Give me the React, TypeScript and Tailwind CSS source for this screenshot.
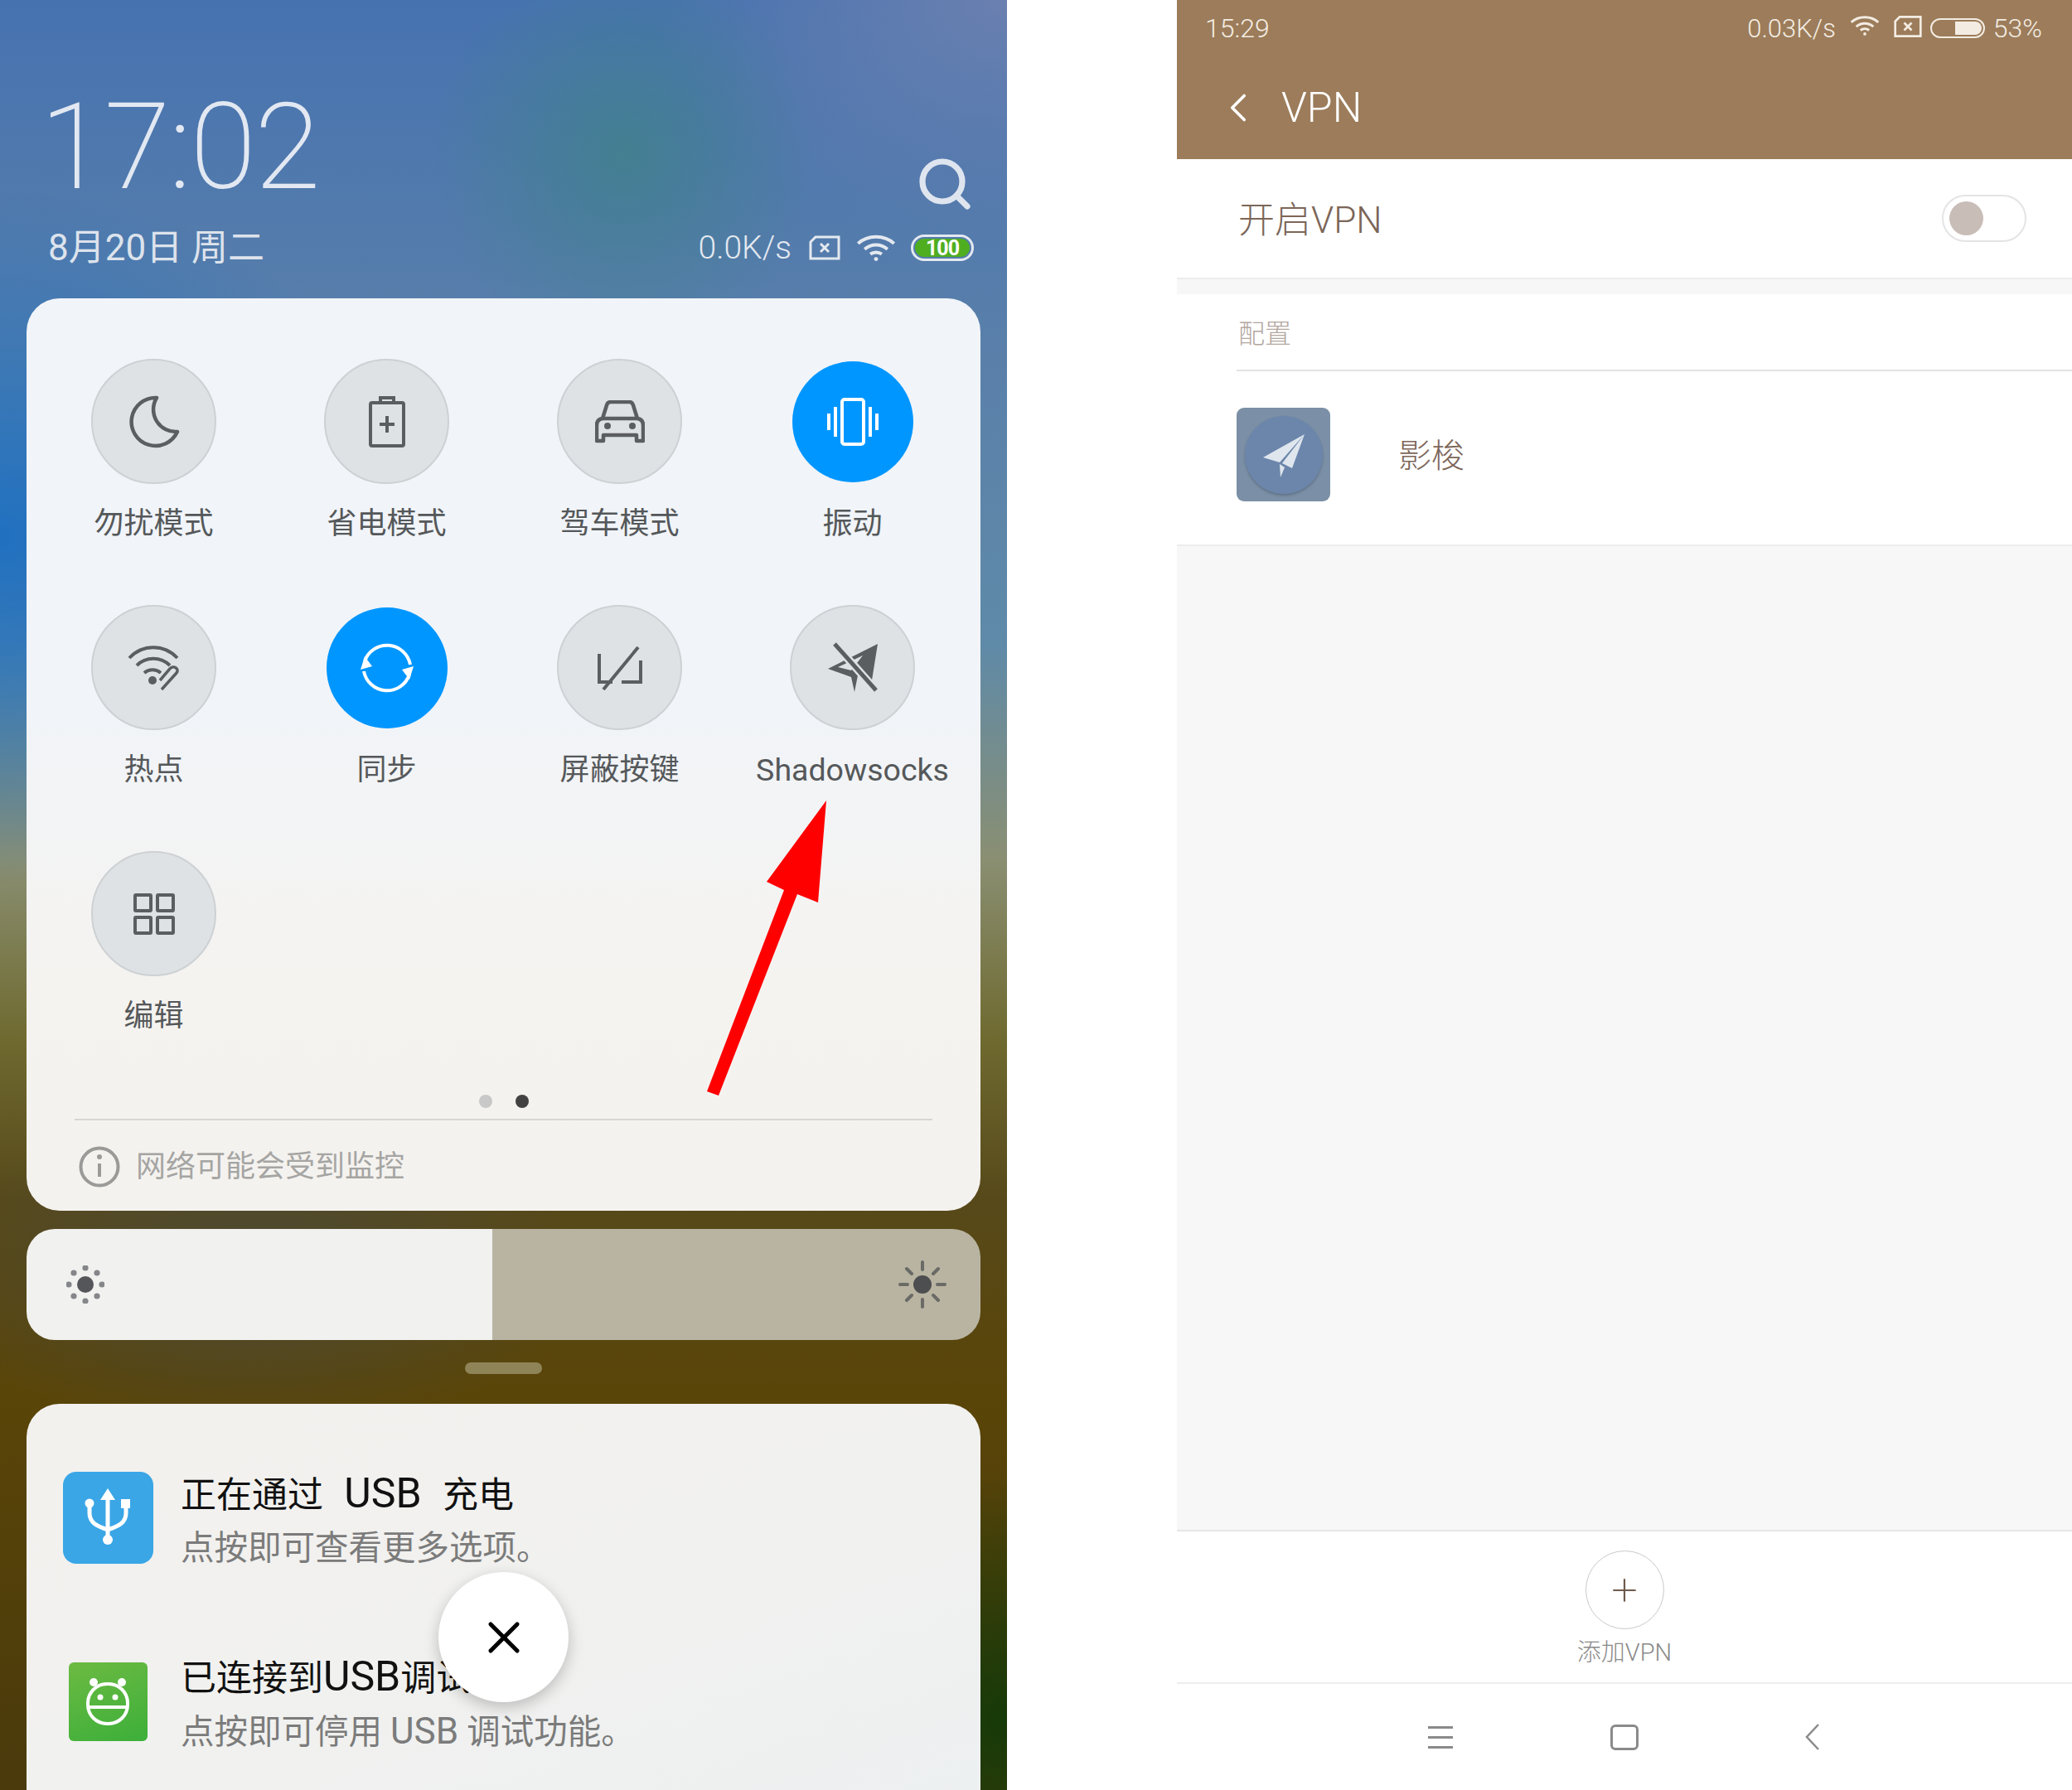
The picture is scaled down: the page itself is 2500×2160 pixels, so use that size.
import { Search, X, Plus, ChevronLeft } from "lucide-react";
import type { ReactNode } from "react";

function Tile({ label, active, wide, children }: { label: string; active?: boolean; wide?: boolean; children: ReactNode }) {
  return (
    <div className="flex h-[297px] flex-col items-center">
      <div className="flex h-[151px] items-center justify-center">
        <div
          className={`flex items-center justify-center rounded-full ${
            active ? "h-[146px] w-[146px] bg-[#0096ff]" : "h-[151px] w-[151px] border-2 border-[#cdd1d3] bg-[#dfe2e4]"
          }`}
        >
          {children}
        </div>
      </div>
      <div className={`mt-[26px] leading-[44px] font-normal whitespace-nowrap text-[#55585a] ${wide ? "text-[37.5px]" : "text-[36px]"}`}>{label}</div>
    </div>
  );
}

function SimIcon({ color }: { color: string }) {
  return (
    <svg width="40" height="30" viewBox="0 0 40 30" fill="none" stroke={color} strokeWidth="3">
      <path d="M9 2h28v26H3V8z" />
      <path d="M15 10l10 10M25 10L15 20" />
    </svg>
  );
}

function WifiIcon({ color, size }: { color: string; size: number }) {
  return (
    <svg width={size} height={size * 0.72} viewBox="0 0 48 35" fill="none" stroke={color} strokeWidth="4">
      <path d="M2 12c12-11 32-11 44 0" />
      <path d="M10 19c8-7 20-7 28 0" />
      <path d="M17 25c4-3 10-3 14 0" />
      <circle cx="24" cy="31" r="2.5" fill={color} stroke="none" />
    </svg>
  );
}

function SunSmall() {
  return (
    <svg width="46" height="46" viewBox="0 0 46 46" fill="#55565a">
      <circle cx="23" cy="23" r="10" />
      {[[23, 3], [23, 43], [3, 23], [43, 23], [9, 9], [37, 9], [9, 37], [37, 37]].map(([x, y]) => (
        <circle key={`${x}-${y}`} cx={x} cy={y} r="3.6" fill="#85868a" />
      ))}
    </svg>
  );
}

function SunLarge() {
  return (
    <svg width="58" height="58" viewBox="0 0 58 58" fill="none" stroke="#6a6a66" strokeWidth="4" strokeLinecap="round">
      <circle cx="29" cy="29" r="11" fill="#4d4e50" stroke="none" />
      <path d="M29 2v9M29 47v9M2 29h9M47 29h9M10 10l6 6M42 42l6 6M48 10l-6 6M16 42l-6 6" />
    </svg>
  );
}

function NotificationRow({
  icon,
  title,
  desc,
  className,
}: {
  icon: ReactNode;
  title: ReactNode;
  desc: ReactNode;
  className: string;
}) {
  return (
    <div className={`flex items-center ${className}`}>
      <div className="mr-[-10px] flex w-[196px] shrink-0 justify-center">{icon}</div>
      <div className="flex flex-col pt-[7px]">
        <div className="text-[43px] leading-[56px] font-normal whitespace-pre text-[#111]">{title}</div>
        <div className="mt-[8px] text-[40.5px] leading-[56px] font-normal whitespace-pre text-[#7b7b7b]">{desc}</div>
      </div>
    </div>
  );
}

export default function App() {
  return (
    <div className="flex h-[2160px] w-[2500px] overflow-hidden bg-white font-['Roboto','Noto_Sans_CJK_SC',sans-serif] font-light">
      {/* left phone */}
      <div className="relative h-full w-[1215px] shrink-0 overflow-hidden bg-[radial-gradient(ellipse_230px_240px_at_62%_8.5%,#41808cd8,transparent),radial-gradient(ellipse_420px_300px_at_100%_0%,#6a80b0,transparent),radial-gradient(ellipse_500px_420px_at_0%_30%,#2070c0,transparent),radial-gradient(ellipse_300px_300px_at_100%_96%,#153a08,transparent),radial-gradient(ellipse_400px_200px_at_25%_71%,#4a4a3ccc,transparent),linear-gradient(180deg,#4672b0_0%,#5a80aa_20%,#5f8aa8_36%,#8a8f72_48%,#6f6a30_58%,#57491a_67%,#5a4508_78%,#4a3a0c_100%)]">
        <div className="flex h-[360px] flex-col pt-[96px] pr-[39px] pl-[48px]">
          <div className="flex items-end justify-between">
            <div className="pt-[2px] text-[145px] leading-[158px] font-extralight tracking-[-2px] text-[#e2e8f2]">17:02</div>
            <Search size={72} strokeWidth={2.4} className="mb-[-2px] text-[#dfe5ef]" />
          </div>
          <div className="mt-[18px] mr-[6px] flex items-center justify-between pl-[10px]">
            <div className="text-[44px] leading-[50px] font-normal text-[#dde3ec]">8月20日 周二</div>
            <div className="mr-[-5px] flex items-center text-[#e4e9f0]">
              <span className="text-[39px] leading-[50px]">0.0K/s</span>
              <span className="ml-[20px]"><SimIcon color="#e4e9f0" /></span>
              <span className="ml-[18px]"><WifiIcon color="#e4e9f0" size={48} /></span>
              <span className="ml-[18px] flex h-[32px] w-[76px] items-center justify-center rounded-full border-[3px] border-[#e4e9f0] p-[2px]">
                <span className="flex h-full w-full items-center justify-center rounded-full bg-[#4fae20] text-[25px] leading-none font-bold tracking-[-1px] text-white">100</span>
              </span>
            </div>
          </div>
        </div>

        {/* quick settings */}
        <div className="mx-[32px] h-[1101px] rounded-[40px] bg-[linear-gradient(180deg,#f1f4f9_0%,#f1f4f8_45%,#f5f3f0_75%,#f4f2ef_100%)]">
          <div className="grid grid-cols-[repeat(4,281px)] pt-[73px] pr-[11px] pl-[13px]">
            <Tile label="勿扰模式">
              <svg width="62" height="64" viewBox="0 0 62 64" fill="none" stroke="#5b5e60" strokeWidth="4.5">
                <path d="M34 3A29 29 0 1 0 59 44A27 27 0 0 1 34 3Z" strokeLinejoin="round" />
              </svg>
            </Tile>
            <Tile label="省电模式">
              <svg width="46" height="62" viewBox="0 0 46 62" fill="none" stroke="#5b5e60" strokeWidth="4">
                <rect x="3" y="8" width="40" height="52" rx="2" />
                <path d="M15 6V2h16v4M23 24v20M14 34h18" />
              </svg>
            </Tile>
            <Tile label="驾车模式">
              <svg width="60" height="52" viewBox="0 0 60 52" fill="none" stroke="#5b5e60" strokeWidth="4.5" strokeLinejoin="round">
                <path d="M9 22l5-16q1-4 5-4h22q4 0 5 4l5 16" />
                <path d="M9 22q-7 1-7 8v19h8v-7h40v7h8V30q0-7-7-8z" />
                <circle cx="15" cy="31" r="4" fill="#5b5e60" stroke="none" />
                <circle cx="45" cy="31" r="4" fill="#5b5e60" stroke="none" />
              </svg>
            </Tile>
            <Tile label="振动" active>
              <svg width="62" height="58" viewBox="0 0 62 58" fill="none" stroke="#fff" strokeWidth="4">
                <rect x="18" y="2" width="26" height="54" rx="3" />
                <path d="M10 11v36M2 19v20M52 11v36M60 19v20" />
              </svg>
            </Tile>
            <Tile label="热点">
              <svg width="66" height="56" viewBox="0 0 66 56" fill="none" stroke="#5b5e60" strokeWidth="4">
                <path d="M3 16c16-17 42-17 58 0M12 25c11-11 29-11 40 0M21 34c6-5 14-5 20 0" />
                <circle cx="31" cy="43" r="5" fill="#5b5e60" stroke="none" />
                <path d="M42 54l18-20c4-5-4-10-8-5L40 43" strokeWidth="3.5" />
              </svg>
            </Tile>
            <Tile label="同步" active>
              <svg width="64" height="64" viewBox="0 0 64 64" fill="none" stroke="#fff" strokeWidth="4">
                <path d="M5 24A28.500 28.500 0 0 1 60 28" />
                <path d="M59 40A28.500 28.500 0 0 1 4 36" />
                <path d="M5 18l9 12-14 4zM59 46l-9-12 14-4z" fill="#fff" stroke="none" />
              </svg>
            </Tile>
            <Tile label="屏蔽按键">
              <svg width="56" height="54" viewBox="0 0 56 54" fill="none" stroke="#5b5e60" strokeWidth="4">
                <path d="M3 10v34h16M30 44h23V18M8 53L50 2" />
              </svg>
            </Tile>
            <Tile label="Shadowsocks" wide>
              <svg width="64" height="62" viewBox="0 0 64 62" fill="#5b5e60">
                <path d="M62 2L54 52 38 40 34 60 30 42 2 32zM30 34l-16-4 30-14z" fillRule="evenodd" />
                <path d="M10 2l50 56" stroke="#dfe2e4" strokeWidth="10" />
                <path d="M10 2l50 56" stroke="#5b5e60" strokeWidth="5" />
              </svg>
            </Tile>
            <Tile label="编辑">
              <svg width="50" height="50" viewBox="0 0 50 50" fill="none" stroke="#5b5e60" strokeWidth="4">
                <rect x="2" y="2" width="19" height="19" rx="1" />
                <rect x="29" y="2" width="19" height="19" rx="1" />
                <rect x="2" y="29" width="19" height="19" rx="1" />
                <rect x="29" y="29" width="19" height="19" rx="1" />
              </svg>
            </Tile>
          </div>
          <div className="mt-[-3px] flex justify-center gap-[28px]">
            <span className="h-[16px] w-[16px] rounded-full bg-[#c8c8c8]" />
            <span className="h-[16px] w-[16px] rounded-full bg-[#424242]" />
          </div>
          <div className="mx-[58px] mt-[13px] border-t-2 border-[#d6d6d4]" />
          <div className="flex items-center pt-[31px] pl-[63px]">
            <svg width="50" height="50" viewBox="0 0 50 50" fill="none" stroke="#9a9a98" strokeWidth="4">
              <circle cx="25" cy="25" r="22.5" />
              <path d="M25 21v16" />
              <circle cx="25" cy="13" r="3" fill="#9a9a98" stroke="none" />
            </svg>
            <span className="ml-[19px] text-[36px] leading-[50px] font-normal text-[#a5a5a3]">网络可能会受到监控</span>
          </div>
        </div>

        {/* brightness */}
        <div className="mx-[32px] mt-[22px] flex h-[134px] overflow-hidden rounded-[34px]">
          <div className="flex w-[562px] items-center bg-[#f1f1ef] pl-[48px]">
            <SunSmall />
          </div>
          <div className="flex flex-1 items-center justify-end bg-[#b9b4a2] pr-[41px]">
            <SunLarge />
          </div>
        </div>
        <div className="mx-auto mt-[27px] h-[14px] w-[93px] rounded-full bg-[#8f8458]" />

        {/* notifications */}
        <div className="relative mx-[32px] mt-[36px] h-[500px] rounded-t-[40px] bg-[linear-gradient(160deg,#f3f1ee_0%,#f1f1ef_50%,#edf0f1_100%)] pt-[81px]">
          <NotificationRow
            className="h-[112px]"
            icon={
              <div className="flex h-[111px] w-[109px] shrink-0 items-center justify-center rounded-[16px] bg-[#3aa6e6]">
                <svg width="56" height="70" viewBox="0 0 56 70" fill="none" stroke="#fff" strokeWidth="5">
                  <path d="M28 10v50M6 20v10c0 12 10 16 22 20 12-4 22-8 22-20V20" />
                  <path d="M28 0l9 14H19z" fill="#fff" stroke="none" />
                  <circle cx="28" cy="62" r="6" fill="#fff" stroke="none" />
                  <circle cx="6" cy="18" r="5.500" fill="#fff" stroke="none" />
                  <rect x="44" y="13" width="11" height="11" fill="#fff" stroke="none" />
                </svg>
              </div>
            }
            title={
              <>
                正在通过<span className="tracking-[2px]">{"  "}</span>
                <span className="text-[50px]">USB</span>
                <span className="tracking-[2px]">{"  "}</span>充电
              </>
            }
            desc="点按即可查看更多选项。"
          />
          <NotificationRow
            className="mt-[110px] h-[112px]"
            icon={
              <div className="flex h-[95px] w-[95px] shrink-0 items-center justify-center rounded-[6px] bg-[linear-gradient(160deg,#6cba42,#3caf3a)]">
                <svg width="54" height="60" viewBox="0 0 54 60" fill="none" stroke="#fff" strokeWidth="4">
                  <rect x="3" y="9" width="48" height="48" rx="23" />
                  <path d="M4 37h46" />
                  <circle cx="10" cy="7" r="5" fill="#fff" stroke="none" />
                  <circle cx="44" cy="7" r="5" fill="#fff" stroke="none" />
                  <circle cx="18" cy="25" r="3.500" fill="#fff" stroke="none" />
                  <circle cx="36" cy="25" r="3.500" fill="#fff" stroke="none" />
                </svg>
              </div>
            }
            title={
              <>
                已连接到<span className="text-[50px]">USB</span>调试
              </>
            }
            desc={
              <>
                点按即可停用 <span className="text-[44px]">USB</span> 调试功能。
              </>
            }
          />
          {/* close button over the notifications */}
          <div className="absolute top-[203px] left-[497px] flex h-[157px] w-[157px] items-center justify-center rounded-full bg-white shadow-[0_6px_18px_rgba(0,0,0,0.22)]">
            <X size={64} strokeWidth={1.9} className="text-black" />
          </div>
        </div>

        {/* red annotation arrow */}
        <svg className="absolute top-0 left-0" width="1215" height="2160" viewBox="0 0 1215 2160">
          <polygon points="997,966 987,1089 962,1079 867,1322 853,1317 946,1074 925,1064" fill="#ff0000" />
        </svg>
      </div>

      <div className="w-[205px] shrink-0 bg-white" />

      {/* right phone */}
      <div className="flex h-full flex-1 flex-col bg-[#f7f7f7]">
        <div className="h-[192px] shrink-0 bg-[#9c7c5a] text-[#f3ece3]">
          <div className="flex h-[68px] items-center justify-between pr-[36px] pl-[34px]">
            <span className="text-[32px] leading-none">15:29</span>
            <div className="flex items-center">
              <span className="text-[31px] leading-none">0.03K/s</span>
              <span className="mb-[6px] ml-[17px]"><WifiIcon color="#f3ece3" size={36} /></span>
              <span className="mb-[4px] ml-[14px] scale-90"><SimIcon color="#f3ece3" /></span>
              <span className="relative ml-[7px] flex h-[24px] w-[66px] items-center justify-end rounded-full border-2 border-[#f3ece3] p-[2px]">
                <span className="h-full w-[32px] rounded-r-full bg-[#f3ece3]" />
              </span>
              <span className="ml-[10px] text-[32px] leading-none">53%</span>
            </div>
          </div>
          <div className="flex h-[124px] items-center">
            <ChevronLeft size={58} strokeWidth={1.5} className="ml-[45px] text-white" />
            <span className="ml-[23px] text-[50px] leading-none text-white">VPN</span>
          </div>
        </div>

        <div className="flex h-[145px] shrink-0 items-center justify-between border-b-2 border-[#ededed] bg-white pr-[55px] pl-[74px]">
          <span className="pt-[4px] text-[44px] leading-none text-[#7c6658]">开启VPN</span>
          <span className="flex h-[57px] w-[102px] items-center rounded-full border-2 border-[#e4e4e4] pl-[7px]">
            <span className="h-[41px] w-[41px] rounded-full bg-[#c9bdb8]" />
          </span>
        </div>
        <div className="h-[18px] shrink-0" />
        <div className="shrink-0 bg-white">
          <div className="ml-[72px] flex h-[93px] items-center border-b-2 border-[#e3e3e5] pt-[5px] pl-[2px] text-[32px] leading-none text-[#b3a79f]">配置</div>
          <div className="flex h-[211px] items-center border-b-2 border-[#ededed] pb-[8px] pl-[72px]">
            <div className="flex h-[113px] w-[113px] items-center justify-center rounded-[9px] bg-[#7b90a6]">
              <div className="flex h-[94px] w-[94px] items-center justify-center rounded-full bg-[#6c86ab] shadow-[0_2px_3px_rgba(60,70,90,0.4)]">
                <svg width="54" height="54" viewBox="0 0 54 54" fill="#dfe6ee">
                  <path d="M52 2L2 30l20 6zM52 2L25 37l12 6zM22 38l1 16 5-12z" />
                </svg>
              </div>
            </div>
            <span className="mt-[5px] ml-[82px] text-[40px] leading-none text-[#7c6658]">影梭</span>
          </div>
        </div>
        <div className="flex-1" />
        <div className="flex h-[184px] shrink-0 flex-col items-center border-t-2 border-[#e6e6e6] bg-white pt-[23px]">
          <div className="flex h-[95px] w-[95px] items-center justify-center rounded-full border-[1.5px] border-[#c9c9c9]">
            <Plus size={44} strokeWidth={1.2} className="text-[#6e5a4c]" />
          </div>
          <span className="mt-[10px] text-[29px] leading-[36px] text-[#8a8a8a]">添加VPN</span>
        </div>
        <div className="flex h-[130px] shrink-0 items-center border-t-2 border-[#ededed] bg-white">
          <div className="ml-[303px] flex h-[27px] w-[30px] flex-col justify-between">
            <span className="h-[3px] bg-[#8a8a8a]" />
            <span className="h-[3px] bg-[#8a8a8a]" />
            <span className="h-[3px] bg-[#8a8a8a]" />
          </div>
          <div className="ml-[190px] h-[31px] w-[34px] rounded-[6px] border-[3px] border-[#8a8a8a]" />
          <svg className="ml-[201px]" width="18" height="32" viewBox="0 0 18 32" fill="none" stroke="#8a8a8a" strokeWidth="2.500">
            <path d="M16 1L2 16l14 15" />
          </svg>
        </div>
      </div>
    </div>
  );
}
